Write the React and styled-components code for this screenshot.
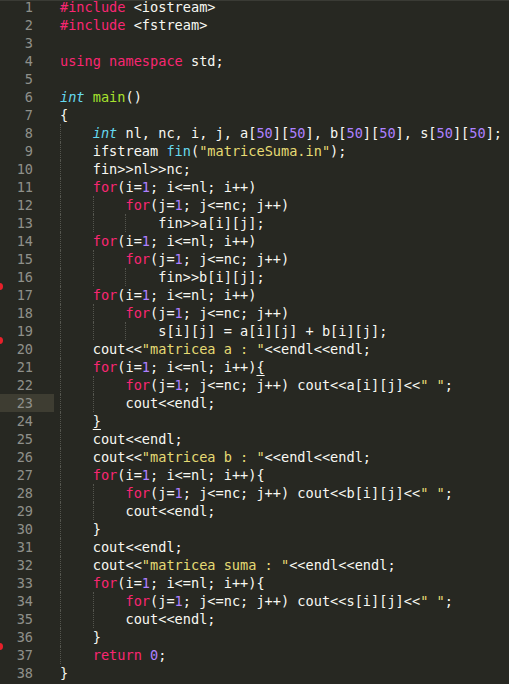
import React from "react";
import styled, { createGlobalStyle, css } from "styled-components";

const source = `#include <iostream>
#include <fstream>

using namespace std;

int main()
{
    int nl, nc, i, j, a[50][50], b[50][50], s[50][50];
    ifstream fin("matriceSuma.in");
    fin>>nl>>nc;
    for(i=1; i<=nl; i++)
        for(j=1; j<=nc; j++)
            fin>>a[i][j];
    for(i=1; i<=nl; i++)
        for(j=1; j<=nc; j++)
            fin>>b[i][j];
    for(i=1; i<=nl; i++)
        for(j=1; j<=nc; j++)
            s[i][j] = a[i][j] + b[i][j];
    cout<<"matricea a : "<<endl<<endl;
    for(i=1; i<=nl; i++){
        for(j=1; j<=nc; j++) cout<<a[i][j]<<" ";
        cout<<endl;
    }
    cout<<endl;
    cout<<"matricea b : "<<endl<<endl;
    for(i=1; i<=nl; i++){
        for(j=1; j<=nc; j++) cout<<b[i][j]<<" ";
        cout<<endl;
    }
    cout<<endl;
    cout<<"matricea suma : "<<endl<<endl;
    for(i=1; i<=nl; i++){
        for(j=1; j<=nc; j++) cout<<s[i][j]<<" ";
        cout<<endl;
    }
    return 0;
}`;

const ACTIVE_LINE = 23;
const MARKED_LINES = [17, 20, 37];
// bracket pair around the cursor: [line, column]
const MATCHED = [
  [21, 24],
  [24, 4],
];

const TOKEN_RE =
  /("[^"]*")|(#include|\b(?:using|namespace|for|return)\b)|(\bint\b)|(\b\d+\b)|(\bmain\b(?=\())|(\bfin\b(?=\())/g;

const tokenize = (text) => {
  const out = [];
  let last = 0;
  let m;
  TOKEN_RE.lastIndex = 0;
  while ((m = TOKEN_RE.exec(text))) {
    if (m.index > last) out.push({ kind: "plain", text: text.slice(last, m.index), start: last });
    const kind = m[1] ? "string" : m[2] ? "keyword" : m[3] ? "type" : m[4] ? "number" : m[5] ? "entity" : "call";
    out.push({ kind, text: m[0], start: m.index });
    last = m.index + m[0].length;
  }
  if (last < text.length) out.push({ kind: "plain", text: text.slice(last), start: last });
  return out;
};

const GlobalStyle = createGlobalStyle`
  html, body {
    margin: 0;
    padding: 0;
    background: #272822;
    overflow: hidden;
  }
`;

const Editor = styled.div`
  display: flex;
  flex-direction: column;
  width: 509px;
  height: 684px;
  background: #272822;
  border-top: 1px solid #3a3b35;
  box-sizing: border-box;
  overflow: hidden;
  font-family: "DejaVu Sans Mono", "Liberation Mono", monospace;
  font-size: 13.6px;
`;

const Lines = styled.div`
  display: flex;
  flex-direction: column;
  margin-top: -3px;
`;

const Row = styled.div`
  display: flex;
  height: 18px;
  line-height: 18px;
`;

const Gutter = styled.div`
  position: relative;
  flex: 0 0 54px;
  box-sizing: border-box;
  padding-right: 21px;
  text-align: right;
  color: #8f908a;
  background: ${(p) => (p.$active ? "#3e3d32" : "transparent")};
`;

const Marker = styled.span`
  position: absolute;
  left: -4px;
  top: -3px;
  width: 7px;
  height: 7px;
  border-radius: 50%;
  background: #e8202a;
`;

const Code = styled.div`
  padding-left: 6px;
  white-space: pre;
  color: #f8f8f2;
`;

const Guide = styled.span`
  display: inline-block;
  box-sizing: border-box;
  width: 4ch;
  height: 18px;
  vertical-align: top;
  border-left: 1px dotted #54554e;
`;

const kinds = {
  plain: css`color: #f8f8f2;`,
  keyword: css`color: #f92672;`,
  type: css`color: #66d9ef; font-style: italic;`,
  number: css`color: #ae81ff;`,
  string: css`color: #e6db74;`,
  entity: css`color: #a6e22e;`,
  call: css`color: #66d9ef;`,
};

const Tok = styled.span`
  ${(p) => kinds[p.$kind]}
`;

const Bracket = styled.span`
  text-decoration: underline;
  text-underline-offset: 3px;
`;

const renderText = (tok, lineNo) => {
  const hit = MATCHED.find(([l, c]) => l === lineNo && c >= tok.start && c < tok.start + tok.text.length);
  if (!hit) return tok.text;
  const i = hit[1] - tok.start;
  return (
    <>
      {tok.text.slice(0, i)}
      <Bracket>{tok.text[i]}</Bracket>
      {tok.text.slice(i + 1)}
    </>
  );
};

const CodeLine = ({ text, lineNo }) => {
  const lead = text.match(/^ */)[0].length;
  const levels = text.trim() ? Math.floor(lead / 4) : 0;
  const body = text.slice(levels * 4);
  const toks = tokenize(body).map((t) => ({ ...t, start: t.start + levels * 4 }));
  return (
    <Code>
      {Array.from({ length: levels }, (_, i) => (
        <Guide key={i} />
      ))}
      {toks.map((t, i) => (
        <Tok key={i} $kind={t.kind}>
          {renderText(t, lineNo)}
        </Tok>
      ))}
    </Code>
  );
};

export default function App() {
  const lines = source.split("\n");
  return (
    <>
      <GlobalStyle />
      <Editor>
        <Lines>
          {lines.map((text, i) => {
            const n = i + 1;
            return (
              <Row key={n}>
                <Gutter $active={n === ACTIVE_LINE}>
                  {MARKED_LINES.includes(n) && <Marker />}
                  {n}
                </Gutter>
                <CodeLine text={text} lineNo={n} />
              </Row>
            );
          })}
        </Lines>
      </Editor>
    </>
  );
}
